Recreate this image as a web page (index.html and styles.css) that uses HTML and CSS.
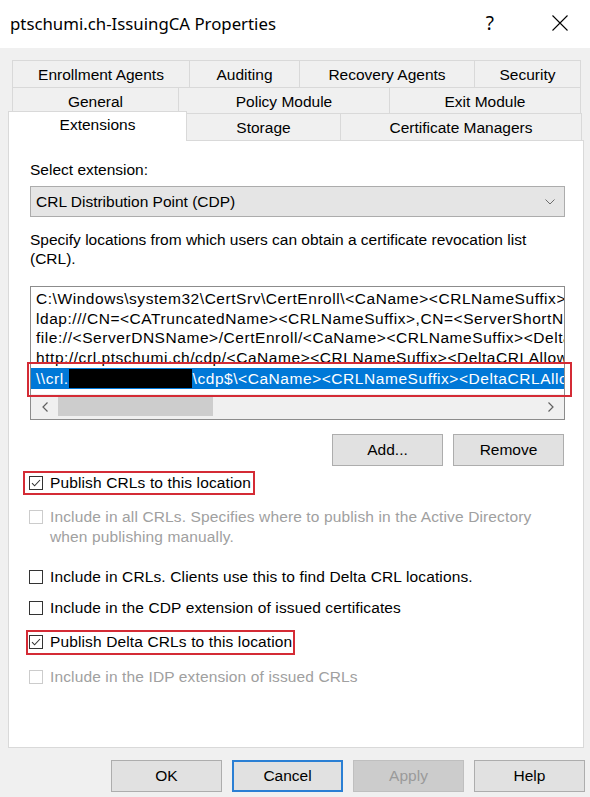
FILE: index.html
```html
<!DOCTYPE html>
<html>
<head>
<meta charset="utf-8">
<title>ptschumi.ch-IssuingCA Properties</title>
<link rel="stylesheet" href="styles.css">
</head>
<body>
<header class="titlebar">
  <span class="title">ptschumi.ch-IssuingCA Properties</span>
  <span class="tb-help">?</span>
  <svg class="tb-close" width="16" height="16" viewBox="0 0 16 16"><path d="M0.5 0.5L15.5 15.5M15.5 0.5L0.5 15.5" stroke="#000" stroke-width="1.1" fill="none"/></svg>
</header>

<nav class="tabs">
  <div class="tabrow row1">
    <div class="tab t-enroll">Enrollment Agents</div>
    <div class="tab t-audit">Auditing</div>
    <div class="tab t-recovery">Recovery Agents</div>
    <div class="tab t-security last">Security</div>
  </div>
  <div class="tabrow row2">
    <div class="tab t-general">General</div>
    <div class="tab t-policy">Policy Module</div>
    <div class="tab t-exit last">Exit Module</div>
  </div>
  <div class="tabrow row3">
    <div class="tab t-ext selected">Extensions</div>
    <div class="tab t-storage">Storage</div>
    <div class="tab t-certmgr last">Certificate Managers</div>
  </div>
</nav>

<main class="panel">
  <div class="label">Select extension:</div>
  <div class="combo">
    <span>CRL Distribution Point (CDP)</span>
    <svg class="combo-arrow" width="10" height="6" viewBox="0 0 10 6"><path d="M0.5 0.5L5 5L9.5 0.5" stroke="#6d6d6d" stroke-width="1" fill="none"/></svg>
  </div>
  <p class="desc">Specify locations from which users can obtain a certificate revocation list<br>(CRL).</p>

  <div class="listwrap">
    <div class="listbox">
      <div class="lines">
        <div class="line">C:\Windows\system32\CertSrv\CertEnroll\&lt;CaName&gt;&lt;CRLNameSuffix&gt;&lt;DeltaCRLAllowed&gt;.crl</div>
        <div class="line">ldap:///CN=&lt;CATruncatedName&gt;&lt;CRLNameSuffix&gt;,CN=&lt;ServerShortName&gt;,CN=CDP,CN=Public Key Services</div>
        <div class="line">file://&lt;ServerDNSName&gt;/CertEnroll/&lt;CaName&gt;&lt;CRLNameSuffix&gt;&lt;DeltaCRLAllowed&gt;.crl</div>
        <div class="line">http://crl.ptschumi.ch/cdp/&lt;CaName&gt;&lt;CRLNameSuffix&gt;&lt;DeltaCRLAllowed&gt;.crl</div>
        <div class="line sel">\\crl.<span class="redact"></span>\cdp$\&lt;CaName&gt;&lt;CRLNameSuffix&gt;&lt;DeltaCRLAllowed&gt;.crl</div>
      </div>
      <div class="hscroll">
        <span class="sb-btn"><svg width="6" height="10" viewBox="0 0 6 10"><path d="M5.5 0.5L1 5L5.5 9.5" stroke="#606060" stroke-width="1.2" fill="none"/></svg></span>
        <span class="sb-thumb"></span>
        <span class="sb-track"></span>
        <span class="sb-btn"><svg width="6" height="10" viewBox="0 0 6 10"><path d="M0.5 0.5L5 5L0.5 9.5" stroke="#606060" stroke-width="1.2" fill="none"/></svg></span>
      </div>
    </div>
    <div class="redbox-list"></div>
  </div>

  <div class="btnrow">
    <button class="btn">Add...</button>
    <button class="btn">Remove</button>
  </div>

  <div class="cbrow r1">
    <label class="hl hl-a"><span class="cb"><svg width="12" height="12" viewBox="0 0 12 12"><path d="M2 6.2L4.6 8.8L10 3" stroke="#333" stroke-width="1.1" fill="none"/></svg></span><span>Publish CRLs to this location</span></label>
  </div>
  <div class="cbrow r2 disabled">
    <span class="cb"></span><span>Include in all CRLs. Specifies where to publish in the Active Directory<br>when publishing manually.</span>
  </div>
  <div class="cbrow r3">
    <span class="cb"></span><span>Include in CRLs. Clients use this to find Delta CRL locations.</span>
  </div>
  <div class="cbrow r4">
    <span class="cb"></span><span>Include in the CDP extension of issued certificates</span>
  </div>
  <div class="cbrow r5">
    <label class="hl hl-b"><span class="cb"><svg width="12" height="12" viewBox="0 0 12 12"><path d="M2 6.2L4.6 8.8L10 3" stroke="#333" stroke-width="1.1" fill="none"/></svg></span><span>Publish Delta CRLs to this location</span></label>
  </div>
  <div class="cbrow r6 disabled">
    <span class="cb"></span><span>Include in the IDP extension of issued CRLs</span>
  </div>
</main>

<footer class="footer">
  <button class="btn">OK</button>
  <button class="btn default">Cancel</button>
  <button class="btn dis">Apply</button>
  <button class="btn">Help</button>
</footer>
</body>
</html>
```
FILE: styles.css
```css
* { box-sizing: border-box; }
html, body { margin: 0; padding: 0; }
body {
  width: 590px;
  height: 797px;
  overflow: hidden;
  background: #f0f0f0;
  font-family: "Liberation Sans", Arial, sans-serif;
  font-size: 15.5px;
  color: #000;
}

/* title bar */
.titlebar {
  height: 48px;
  background: #fff;
  display: flex;
  align-items: center;
  padding: 0 22px 2px 10px;
}
.title {
  flex: 1;
  font-family: "Noto Sans", "Open Sans", sans-serif;
  font-size: 16.8px;
  color: #000;
}
.tb-help {
  font-family: "Noto Sans", sans-serif;
  font-size: 19px;
  margin-right: 58px;
}
.tb-close { display: block; }

/* tabs */
.tabs { margin-top: 12px; }
.tabrow { display: flex; }
.row1 { height: 27px; padding-left: 12px; }
.row2 { height: 26px; padding-left: 12px; }
.row3 { height: 27px; padding-left: 8px; align-items: flex-end; }
.tab {
  border-top: 1px solid #d9d9d9;
  border-left: 1px solid #d9d9d9;
  display: flex;
  align-items: center;
  justify-content: center;
  height: 100%;
  background: #f0f0f0;
  padding-top: 2px;
}
.tab.last { border-right: 1px solid #d9d9d9; }
.t-enroll { width: 177px; }
.t-audit { width: 110px; }
.t-recovery { width: 175px; }
.t-security { width: 107px; }
.t-general { width: 166px; }
.t-policy { width: 211px; }
.t-exit { width: 192px; }
.t-ext { width: 179px; }
.t-storage { width: 153px; }
.t-certmgr { width: 242px; }
.tab.selected {
  background: #fff;
  height: 30px;
  margin-bottom: -1px;
  border-right: 1px solid #d9d9d9;
  position: relative;
  z-index: 1;
  padding-top: 0;
  padding-bottom: 3px;
}
.tab.selected + .tab { border-left: none; }

/* panel */
.panel {
  margin-left: 8px;
  width: 576px;
  height: 608px;
  background: #fff;
  border: 1px solid #d9d9d9;
  padding: 19px 18px 0 21px;
  display: flex;
  flex-direction: column;
}
.label { line-height: 20px; }
.combo {
  margin-top: 6px;
  height: 31px;
  background: #e5e5e5;
  border: 1px solid #acacac;
  display: flex;
  align-items: center;
  justify-content: space-between;
  padding: 0 9px 0 5px;
}
.combo-arrow { display: block; }
.desc {
  margin: 13px 0 0;
  line-height: 19px;
}

.listwrap { position: relative; margin-top: 18px; }
.listbox {
  height: 134px;
  border: 1px solid #8c8c8c;
  background: #fff;
  padding: 2px 0 0;
  display: flex;
  flex-direction: column;
}
.lines { overflow: hidden; }
.line {
  height: 19.5px;
  line-height: 19.5px;
  padding-left: 5px;
  white-space: nowrap;
  overflow: hidden;
  letter-spacing: 0.55px;
}
.line.sel { background: #0078d7; color: #fff; height: 21px; line-height: 21px; margin-top: 1px; }
.redact {
  display: inline-block;
  width: 123px;
  height: 19px;
  margin: 0 1px 0 0;
  background: #000;
  vertical-align: -4px;
}
.hscroll {
  margin-top: auto;
  height: 25px;
  display: flex;
  align-items: stretch;
  background: #f0f0f0;
}
.sb-btn {
  width: 27px;
  display: flex;
  align-items: center;
  justify-content: center;
}
.sb-thumb {
  width: 155px;
  margin: 2px 0 3px;
  background: #cdcdcd;
}
.sb-track { flex: 1; }
.redbox-list {
  position: absolute;
  left: -3px;
  top: 76px;
  width: 545px;
  height: 35px;
  border: 2px solid #d42b35;
}

/* buttons */
.btnrow {
  margin-top: 14px;
  display: flex;
  justify-content: flex-end;
  gap: 10px;
  padding-right: 1px;
}
.btn {
  width: 111px;
  height: 32px;
  background: #e1e1e1;
  border: 1px solid #adadad;
  font-family: "Liberation Sans", Arial, sans-serif;
  font-size: 15.5px;
  color: #000;
  padding: 0;
  margin: 0;
}
.btn.default { border: 2px solid #2a7fd4; }
.btn.dis { background: #cccccc; border-color: #bfbfbf; color: #9a9a9a; }

/* checkbox rows */
.cbrow {
  display: flex;
  align-items: flex-start;
  line-height: 20px;
  margin-left: -1px;
  letter-spacing: 0.13px;
}
.cb {
  flex: none;
  width: 14px;
  height: 14px;
  border: 1px solid #333;
  background: #fff;
  margin: 3px 7px 0 0;
  display: flex;
  align-items: center;
  justify-content: center;
}
.disabled { color: #a0a0a0; }
.disabled .cb { border-color: #cccccc; }
.hl {
  display: flex;
  align-items: flex-start;
  outline: 2px solid #d42b35;
}
.hl-a { padding: 0 2px 0 4px; margin-left: -4px; }
.hl-b { padding: 0 1px 1px 1px; margin-left: -1px; }
.r1 { margin-top: 7px; }
.r2 { margin-top: 14px; }
.r3 { margin-top: 20px; }
.r4 { margin-top: 11px; }
.r5 { margin-top: 14px; }
.r6 { margin-top: 14px; }

/* footer */
.footer {
  margin-top: 12px;
  display: flex;
  justify-content: flex-end;
  gap: 10px;
  padding-right: 5px;
}
```
